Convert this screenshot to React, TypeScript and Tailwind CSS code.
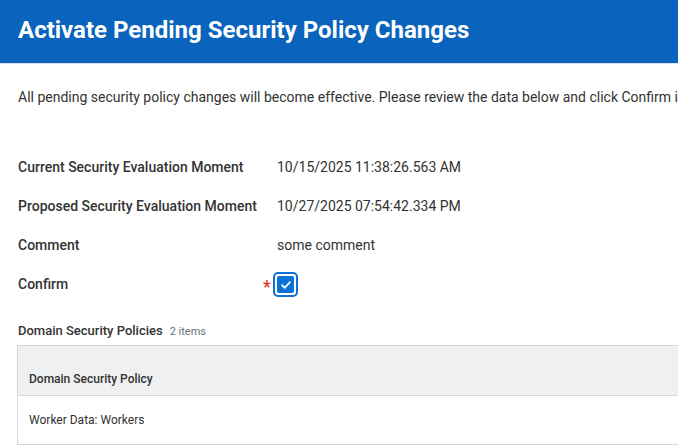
export default function App() {
    const fields = [
        { label: "Current Security Evaluation Moment", value: "10/15/2025 11:38:26.563 AM" },
        { label: "Proposed Security Evaluation Moment", value: "10/27/2025 07:54:42.334 PM" },
        { label: "Comment", value: "some comment" },
    ];

    return (
        <div className="h-[445px] w-[678px] overflow-hidden bg-white font-['Roboto',sans-serif] text-[#333333]">
            <div className="flex h-[64px] items-center border-b border-[#dfe2e6] bg-[#0a63bd] px-[18px]">
                <h1 className="pb-[3px] text-[24px] font-bold text-white">
                    Activate Pending Security Policy Changes
                </h1>
            </div>

            <p className="mt-[23px] whitespace-nowrap pl-[18px] text-[14px] text-[#333333]">
                All pending security policy changes will become effective. Please review the data below and click Confirm if you agree.
            </p>

            <div className="mt-[40px] flex flex-col pl-[18px]">
                {fields.map((f) => (
                    <div key={f.label} className="flex h-[39px] items-center">
                        <div className="w-[259px] text-[14px] font-medium text-[#333333]">{f.label}</div>
                        <div className="text-[14px] text-[#333333]">{f.value}</div>
                    </div>
                ))}
                <div className="flex h-[39px] items-center">
                    <div className="w-[245px] text-[14px] font-medium text-[#333333]">Confirm</div>
                    <span className="mt-[4px] w-[10px] text-[18px] leading-none text-[#de2e21]">*</span>
                    <div className="flex h-[25px] w-[25px] items-center justify-center rounded-[5px] border-2 border-[#0b72d6] bg-white">
                        <div className="flex h-[17px] w-[17px] items-center justify-center rounded-[2px] bg-[#0b72d6]">
                            <svg width="12" height="12" viewBox="0 0 10 10" fill="none">
                                <path d="M1.8 5.2 L4 7.3 L8.3 2.6" stroke="white" strokeWidth="1.5" strokeLinecap="round" strokeLinejoin="round" />
                            </svg>
                        </div>
                    </div>
                </div>
            </div>

            <div className="mt-[17px] flex items-baseline gap-[7px] pl-[18px]">
                <span className="text-[13px] font-medium text-[#333333]">Domain Security Policies</span>
                <span className="text-[11px] text-[#6b6f73]">2 items</span>
            </div>

            <div className="ml-[17px] mt-[4px] border-l border-t border-[#d4d7db]">
                <div className="flex h-[50px] items-end border-b border-[#d4d7db] bg-[#eef0f2] px-[11px] pb-[7px]">
                    <span className="text-[12px] font-medium text-[#333333]">Domain Security Policy</span>
                </div>
                <div className="flex h-[49px] items-center border-b border-[#d4d7db] px-[11px]">
                    <span className="text-[12px] text-[#333333]">Worker Data: Workers</span>
                </div>
            </div>
        </div>
    );
}
